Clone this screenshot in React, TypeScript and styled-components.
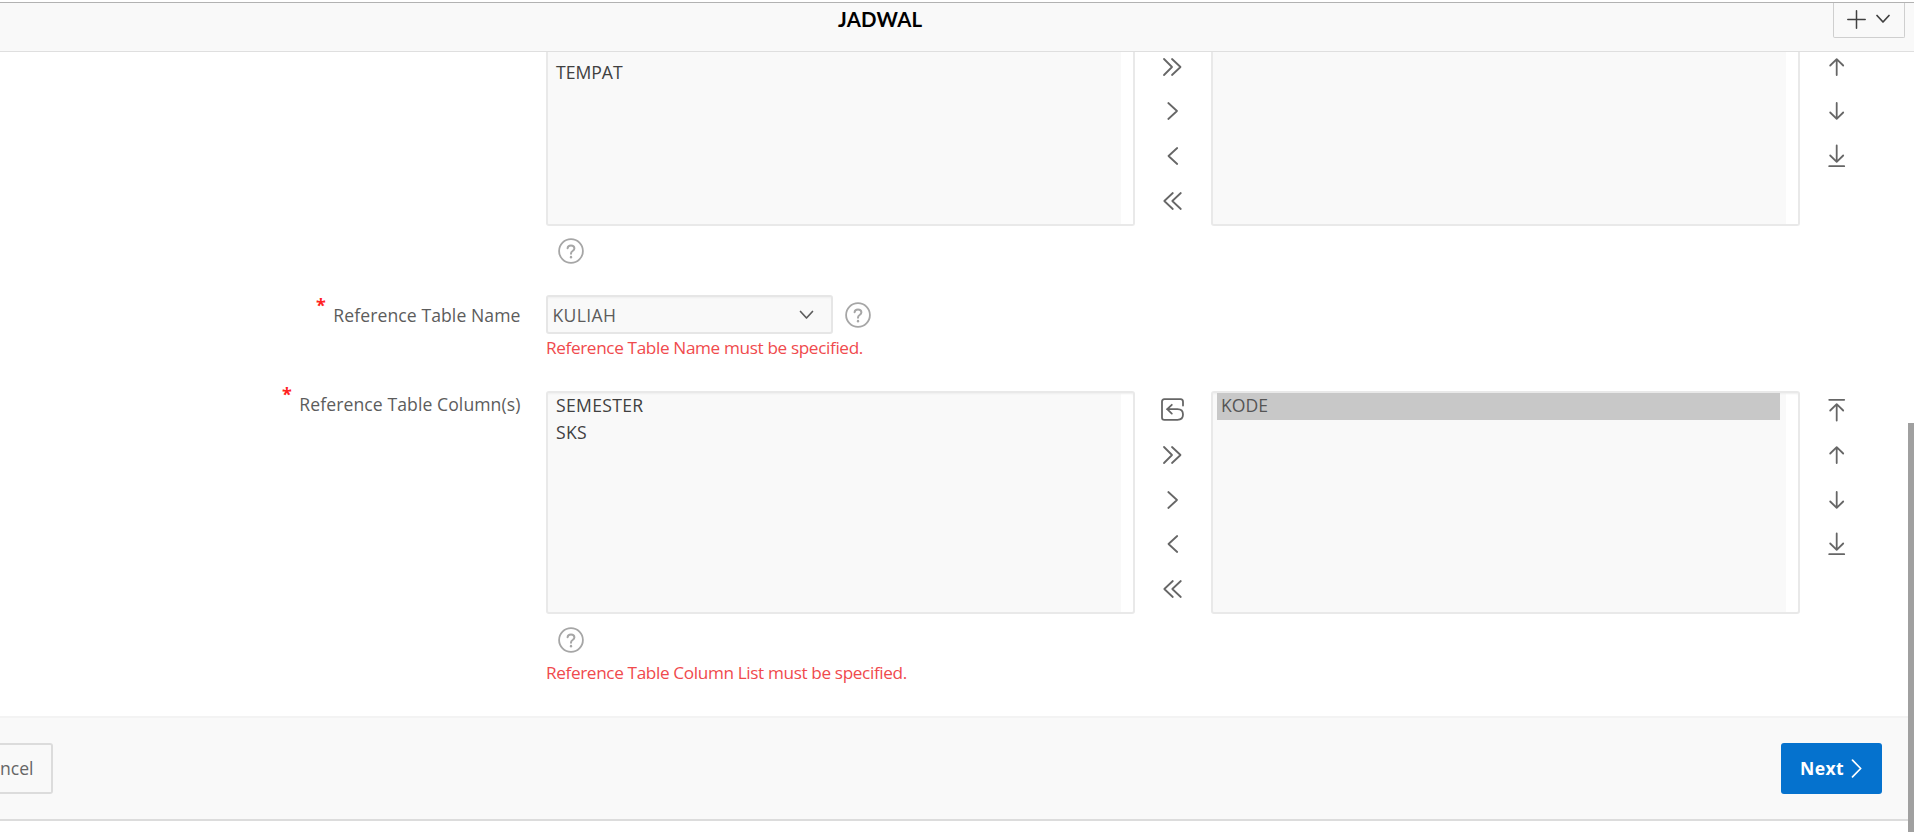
import React from "react";
import styled, { createGlobalStyle } from "styled-components";

const GlobalStyle = createGlobalStyle`
  * { box-sizing: border-box; }
  body { margin: 0; background: #fff; overflow: hidden; }
`;

const Page = styled.div`
  width: 1914px;
  height: 832px;
  display: flex;
  flex-direction: column;
  overflow: hidden;
  position: relative;
  padding-top: 2px;
  font-family: "Open Sans", "Noto Sans", sans-serif;
  font-size: 17.6px;
  line-height: 27px;
  color: #404040;
  white-space: nowrap;
`;

const Header = styled.header`
  height: 50px;
  flex: none;
  display: flex;
  align-items: flex-start;
  justify-content: space-between;
  padding: 0 9px 0 838px;
  background: #f9f9f9;
  border-top: 1px solid #b2b2b2;
  border-bottom: 1px solid #dfdfdf;
`;

const Title = styled.h1`
  margin: 3px 0 0;
  font: 700 20.4px/27px Lato, "Open Sans", sans-serif;
  letter-spacing: 0.2px;
  color: #000;
`;

const AddButton = styled.button`
  width: 72px;
  height: 35px;
  padding: 0 1px 2px 0;
  display: flex;
  align-items: center;
  justify-content: center;
  gap: 10px;
  background: #f9f9f9;
  border: 1px solid #cfcfcf;
  border-top: 0;
  border-radius: 0 0 2px 2px;
  color: #404040;
`;

const Form = styled.main`
  height: 664px;
  flex: none;
  display: flex;
  flex-direction: column;
  padding-left: 546px;
`;

const Row = styled.section<{ $height: number }>`
  height: ${(p) => p.$height}px;
  flex: none;
  display: flex;
  align-items: flex-start;
`;

const Label = styled.label<{ $top: number }>`
  width: 320px;
  margin: ${(p) => p.$top}px 25.5px 0 -345.5px;
  display: flex;
  justify-content: flex-end;
  gap: 7.5px;
  color: #5c5c5c;
  letter-spacing: 0.08px;
`;

const Required = styled.span`
  margin-top: -10px;
  font-size: 18px;
  font-weight: 700;
  letter-spacing: 0;
  color: #f22;
`;

const Field = styled.div`
  display: flex;
  flex-direction: column;
  align-items: flex-start;
`;

const Shuttle = styled.div`
  display: flex;
`;

const ListBox = styled.div<{ $clipped?: boolean }>`
  width: 589px;
  height: ${(p) => (p.$clipped ? 174 : 223)}px;
  padding: ${(p) => (p.$clipped ? "8px" : "0")} 18px 0 4px;
  border: 2px solid #e9e9e9;
  border-top-width: ${(p) => (p.$clipped ? 0 : 2)}px;
  border-radius: ${(p) => (p.$clipped ? "0 0 3px 3px" : "3px")};
  background: linear-gradient(to right, #f9f9f9 573px, #fff 573px);
  box-shadow: ${(p) => (p.$clipped ? "none" : "inset 0 2px 2px -1px #eee")};
`;

const Option = styled.div<{ $selected?: boolean; $track?: number }>`
  height: 27px;
  padding-left: 4px;
  line-height: 24.8px;
  background: ${(p) => (p.$selected ? "#c8c8c8" : "transparent")};
  color: ${(p) => (p.$selected ? "#555" : "#404040")};
  letter-spacing: ${(p) => p.$track ?? 0}px;
`;

const Controls = styled.div<{ $width: number; $clipped?: boolean }>`
  width: ${(p) => p.$width}px;
  padding-top: ${(p) => (p.$clipped ? "2.6px" : "7.3px")};
  display: flex;
  flex-direction: column;
  align-items: center;
  gap: 20.7px;
  color: #666;
`;

const Glyph = styled.svg`
  display: block;
  flex: none;
  fill: none;
  stroke: currentColor;
  stroke-linecap: round;
  stroke-linejoin: round;
`;

const HelpSpot = styled.div<{ $top: number; $left: number }>`
  margin: ${(p) => p.$top}px 0 0 ${(p) => p.$left}px;
  color: #a6a6a6;
`;

const SelectRow = styled.div`
  display: flex;
`;

const Select = styled.div`
  width: 287px;
  height: 39px;
  padding: 1px 17.5px 0 4.5px;
  display: flex;
  align-items: center;
  justify-content: space-between;
  border: 2px solid #e6e6e6;
  border-radius: 3px;
  background: #f9f9f9;
  box-shadow: inset 0 2px 2px -1px #eee;
  color: #5c5c5c;
  letter-spacing: 0.35px;
`;

const ErrorText = styled.p<{ $top: number }>`
  margin: ${(p) => p.$top}px 0 0;
  font-size: 17.2px;
  letter-spacing: -0.37px;
  color: #f04a4d;
`;

const Footer = styled.footer`
  height: 105px;
  flex: none;
  display: flex;
  align-items: flex-start;
  justify-content: space-between;
  padding: 24.5px 32px 0 0;
  background: #f9f9f9;
  border-top: 2px solid #f3f3f3;
  border-bottom: 2px solid #dcdcdc;
`;

const CancelButton = styled.button`
  width: 53px;
  height: 51px;
  padding: 0;
  text-align: left;
  font: inherit;
  color: #666;
  background: #f9f9f9;
  border: 2px solid #dcdcdc;
  border-left: 0;
  border-radius: 0 3px 3px 0;
`;

const NextButton = styled.button`
  width: 101px;
  height: 51px;
  padding: 0 20px 0 19px;
  display: flex;
  align-items: center;
  justify-content: space-between;
  font: inherit;
  font-weight: 700;
  letter-spacing: 0.4px;
  color: #fff;
  background: #0572ce;
  border: 0;
  border-radius: 3px;
`;

const ScrollThumb = styled.div`
  position: absolute;
  right: 0;
  top: 423px;
  bottom: 0;
  width: 6px;
  background: #a0a0a0;
`;

const paths = {
  undo: "M22 7.5V3.8Q22 1.2 19.6 1.2H3.4Q1 1.2 1 3.6V19.4Q1 21.8 3.4 21.8H16.5Q22 21.8 22 16.5T16.5 11.2H6M10.8 6.8L6.2 11.2L10.8 15.6",
  moveAll: "M3 4L11 12L3 20M11 4L19.5 12L11 20",
  move: "M7.3 4L16 12L7.3 20",
  remove: "M16.2 4L7.5 12L16.2 20",
  removeAll: "M11.8 4L3.3 12L11.8 20M19.8 4L11.3 12L19.8 20",
  top: "M4.2 1.8H19.2M11.7 22.5V6.5M5.2 12.5L11.7 6.2L18.2 12.5",
  up: "M11.7 20V4.5M5.2 10.5L11.7 4.2L18.2 10.5",
  down: "M11.7 4V19.5M5.2 13.5L11.7 19.8L18.2 13.5",
  bottom: "M4.2 22.2H19.2M11.7 1.5V17.5M5.2 11.5L11.7 17.8L18.2 11.5",
};

type IconName = keyof typeof paths;

const Icon = ({ name }: { name: IconName }) => (
  <Glyph width="24" height="24" viewBox="0 0 24 24" strokeWidth="1.8">
    <path d={paths[name]} />
  </Glyph>
);

const HelpIcon = () => (
  <Glyph width="26" height="26" viewBox="0 0 26 26" strokeWidth="1.8">
    <circle cx="13" cy="13" r="11.9" />
    <path d="M9.6 10.2Q9.8 7.5 13 7.5T16.4 10.3Q16.4 11.8 14.6 13Q13 14 13 15.8" strokeWidth="2" />
    <path d="M13 19V19.2" strokeWidth="2.4" />
  </Glyph>
);

const Chevron = ({ size }: { size: number }) => (
  <Glyph width={size} height="10" viewBox="0 0 14 10" strokeWidth="1.7">
    <path d="M1 1.5L7 8L13 1.5" />
  </Glyph>
);

const moveIcons: IconName[] = ["undo", "moveAll", "move", "remove", "removeAll"];
const orderIcons: IconName[] = ["top", "up", "down", "bottom"];

interface Item {
  text: string;
  track?: number;
  selected?: boolean;
}

function ShuttleField({ left, right, clipped }: { left: Item[]; right: Item[]; clipped?: boolean }) {
  const start = clipped ? 1 : 0;
  const list = (items: Item[]) => (
    <ListBox $clipped={clipped}>
      {items.map((i) => (
        <Option key={i.text} $selected={i.selected} $track={i.track}>
          {i.text}
        </Option>
      ))}
    </ListBox>
  );
  return (
    <Shuttle>
      {list(left)}
      <Controls $width={76} $clipped={clipped}>
        {moveIcons.slice(start).map((n) => <Icon key={n} name={n} />)}
      </Controls>
      {list(right)}
      <Controls $width={74} $clipped={clipped}>
        {orderIcons.slice(start).map((n) => <Icon key={n} name={n} />)}
      </Controls>
    </Shuttle>
  );
}

export default function App() {
  return (
    <Page>
      <GlobalStyle />
      <Header>
        <Title>JADWAL</Title>
        <AddButton>
          <Glyph width="19" height="19" viewBox="0 0 19 19" strokeWidth="1.5">
            <path d="M9.5 0.8V18.2M0.8 9.5H18.2" />
          </Glyph>
          <Chevron size={14} />
        </AddButton>
      </Header>
      <Form>
        <Row $height={243}>
          <Field>
            <ShuttleField clipped left={[{ text: "TEMPAT" }]} right={[]} />
            <HelpSpot $top={12.4} $left={12.4}><HelpIcon /></HelpSpot>
          </Field>
        </Row>
        <Row $height={96}>
          <Label $top={7}>
            <Required>*</Required>Reference Table Name
          </Label>
          <Field>
            <SelectRow>
              <Select>
                KULIAH
                <Chevron size={15} />
              </Select>
              <HelpSpot $top={7.4} $left={12}><HelpIcon /></HelpSpot>
            </SelectRow>
            <ErrorText $top={0}>Reference Table Name must be specified.</ErrorText>
          </Field>
        </Row>
        <Row $height={325}>
          <Label $top={0}>
            <Required>*</Required>Reference Table Column(s)
          </Label>
          <Field>
            <ShuttleField
              left={[{ text: "SEMESTER", track: 0.3 }, { text: "SKS", track: 0.3 }]}
              right={[{ text: "KODE", selected: true }]}
            />
            <HelpSpot $top={13.4} $left={12.4}><HelpIcon /></HelpSpot>
            <ErrorText $top={5.6}>Reference Table Column List must be specified.</ErrorText>
          </Field>
        </Row>
      </Form>
      <Footer>
        <CancelButton>ncel</CancelButton>
        <NextButton>
          Next
          <Glyph width="11" height="19" viewBox="0 0 11 19" strokeWidth="1.7">
            <path d="M1.5 1.2L9.7 9.5L1.5 17.8" />
          </Glyph>
        </NextButton>
      </Footer>
      <ScrollThumb />
    </Page>
  );
}
